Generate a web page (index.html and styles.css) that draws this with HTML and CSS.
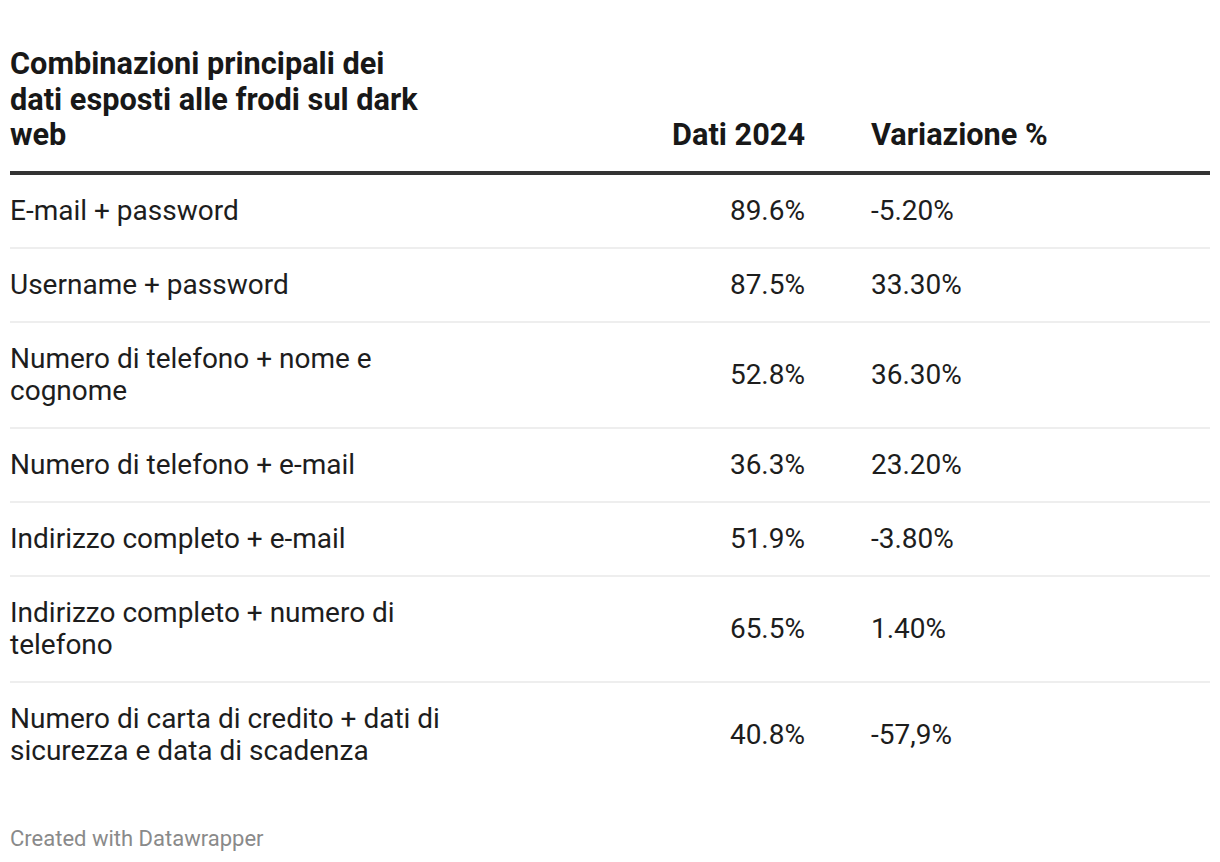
FILE: index.html
```html
<!DOCTYPE html>
<html lang="it">
<head>
<meta charset="utf-8">
<title>Combinazioni principali dei dati esposti alle frodi sul dark web</title>
<link rel="stylesheet" href="styles.css">
</head>
<body>
<div class="chart">
  <table class="dw-table">
    <thead>
      <tr>
        <th class="c1"><span class="title">Combinazioni principali dei dati esposti alle frodi sul dark web</span></th>
        <th class="c2">Dati 2024</th>
        <th class="c3">Variazione %</th>
      </tr>
    </thead>
    <tbody>
      <tr><td class="c1">E-mail + password</td><td class="c2">89.6%</td><td class="c3">-5.20%</td></tr>
      <tr><td class="c1">Username + password</td><td class="c2">87.5%</td><td class="c3">33.30%</td></tr>
      <tr><td class="c1">Numero di telefono + nome e cognome</td><td class="c2">52.8%</td><td class="c3">36.30%</td></tr>
      <tr><td class="c1">Numero di telefono + e-mail</td><td class="c2">36.3%</td><td class="c3">23.20%</td></tr>
      <tr><td class="c1">Indirizzo completo + e-mail</td><td class="c2">51.9%</td><td class="c3">-3.80%</td></tr>
      <tr><td class="c1">Indirizzo completo + numero di telefono</td><td class="c2">65.5%</td><td class="c3">1.40%</td></tr>
      <tr class="last"><td class="c1">Numero di carta di credito + dati di sicurezza e data di scadenza</td><td class="c2">40.8%</td><td class="c3">-57,9%</td></tr>
    </tbody>
  </table>
  <div class="footer">Created with Datawrapper</div>
</div>
</body>
</html>
```
FILE: styles.css
```css
html, body {
  margin: 0;
  padding: 0;
  background: #ffffff;
}

body {
  font-family: Roboto, "Liberation Sans", Arial, sans-serif;
  color: #1d1d1d;
}

.chart {
  padding: 46px 10px 0 10px;
}

.dw-table {
  width: 1200px;
  border-collapse: collapse;
  table-layout: fixed;
}

.dw-table th {
  font-weight: 700;
  font-size: 30.7px;
  line-height: 35.5px;
  color: #181818;
  vertical-align: bottom;
  padding: 0 0 18.5px 0;
  border-bottom: 4px solid #333333;
}

.title {
  display: block;
  max-width: 425px;
}

.dw-table td {
  font-size: 28px;
  line-height: 32px;
  padding: 20px 0;
  border-bottom: 2px solid #eeeeee;
  vertical-align: middle;
}

.dw-table tr.last td {
  border-bottom: none;
}

.c1 {
  width: 434px;
  text-align: left;
}

.c2 {
  width: 361px;
  text-align: right;
}

.c3 {
  text-align: left;
  padding-left: 66px !important;
}

.footer {
  margin-top: 39px;
  font-size: 22px;
  line-height: 26px;
  color: #8a8a8a;
}
```
